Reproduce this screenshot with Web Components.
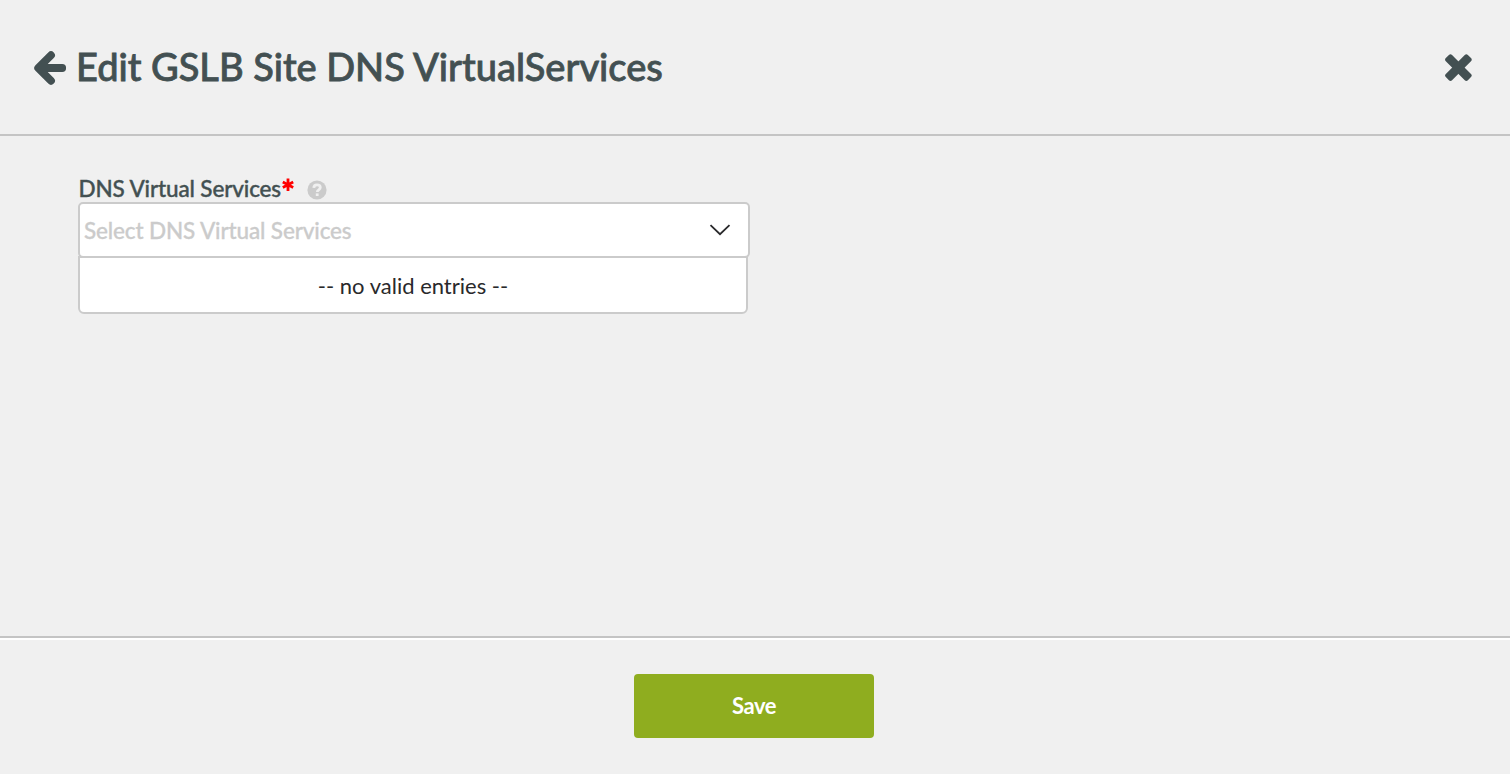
<!DOCTYPE html>
<html lang="en">
<head>
<meta charset="utf-8">
<title>Edit GSLB Site DNS VirtualServices</title>
<style>
html, body { margin: 0; height: 100%; }
body { background: #f0f0f0; font-family: Lato, "Open Sans", sans-serif; color: #435052; overflow: hidden; }
</style>
</head>
<body>
<edit-dialog>
  <dialog-header slot="header">Edit GSLB Site DNS VirtualServices</dialog-header>
  <select-field label="DNS Virtual Services" placeholder="Select DNS Virtual Services">-- no valid entries --</select-field>
  <save-button slot="footer">Save</save-button>
</edit-dialog>
<script>
function define(name, html) {
  customElements.define(name, class extends HTMLElement {
    constructor() {
      super();
      this.attachShadow({ mode: 'open' }).innerHTML = html;
    }
    connectedCallback() {
      this.shadowRoot.querySelectorAll('[data-attr]').forEach(el => {
        el.textContent = this.getAttribute(el.dataset.attr);
      });
    }
  });
}

define('edit-dialog', `
<style>
:host { display: grid; grid-template-rows: 136px 1fr 138px; height: 774px; }
main { padding: 38px 78px 0; min-width: 0; }
footer { box-sizing: border-box; border-top: 2px solid #c4c4c4; box-shadow: inset 0 2px #fff; padding: 36px 2px 0 0; display: flex; justify-content: center; align-items: flex-start; }
</style>
<slot name="header"></slot>
<main><slot></slot></main>
<footer><slot name="footer"></slot></footer>`);

define('dialog-header', `
<style>
:host { box-sizing: border-box; display: flex; align-items: center; height: 136px; padding: 1px 37px 0 33px; border-bottom: 2px solid #c4c4c4; }
h1 { margin: 0 auto 3px 9px; font-size: 38px; line-height: 46px; font-weight: 500; letter-spacing: -.02px; white-space: nowrap; -webkit-text-stroke: .8px #435052; }
svg { display: block; flex: none; }
</style>
<svg width="34" height="36" viewBox="0 0 34 36"><path d="M18 5.2 5.2 18 18 30.8M7 18H29.2" fill="none" stroke="#435052" stroke-width="7.8" stroke-linecap="round" stroke-linejoin="round"/><path d="M7 12v12l6-6z" fill="#435052"/></svg>
<h1><slot></slot></h1>
<svg width="28" height="28" viewBox="0 0 28 28"><g transform="rotate(45 13.4 13.6)" fill="#435052"><rect x="-2.2" y="9.2" width="31.2" height="8.8" rx="2.2"/><rect x="9" y="-2" width="8.8" height="31.2" rx="2.2"/></g></svg>`);

define('select-field', `
<style>
:host { display: block; width: 672px; }
.label { display: flex; height: 28px; align-items: flex-start; }
label { font-size: 22.5px; line-height: 29px; font-weight: 500; white-space: nowrap; letter-spacing: -.14px; padding-left: .5px; -webkit-text-stroke: .4px #435052; }
.star { margin: 4px 0 0 1px; }
.help { margin: 6px 0 0 13px; }
.select { box-sizing: border-box; display: flex; align-items: center; width: 672px; height: 56px; border: 2px solid #cbcbcb; border-radius: 5px; background: #fff; padding: 0 17px 0 4px; color: #cbcbcb; font-size: 22.5px; font-weight: 500; position: relative; z-index: 1; }
.select span { flex: 1; letter-spacing: -.14px; -webkit-text-stroke: .3px #cbcbcb; }
.menu { box-sizing: border-box; width: 670px; height: 58px; margin-top: -2px; border: 2px solid #cbcbcb; border-radius: 0 0 6px 6px; background: #fff; color: #29292b; font-size: 22px; line-height: 55px; text-align: center; }
svg { display: block; flex: none; }
</style>
<div class="label"><label data-attr="label"></label>
<svg class="star" width="12" height="14" viewBox="0 0 12 14"><path d="M6 .6v12.4M.8 4.1l10.4 5.4M11.2 4.1.8 9.5" stroke="#f00" stroke-width="2.8"/></svg>
<svg class="help" width="20" height="20" viewBox="0 0 20 20"><circle cx="10" cy="10" r="9.6" fill="#cbcbcb"/><path d="M6.8 7.9C6.9 5.6 8.2 4.9 10 4.9c2 0 3.3 1 3.3 2.7 0 2.3-3 2.2-3 4.3" fill="none" stroke="#f0f0f0" stroke-width="2.8"/><path d="M8.8 13.4h2.8v2.6H8.8z" fill="#f0f0f0"/></svg></div>
<div class="select"><span data-attr="placeholder"></span>
<svg width="22" height="14" viewBox="0 0 22 14"><path d="m1.5 2.2 9.5 9 9.5-9" fill="none" stroke="#29292b" stroke-width="1.8"/></svg></div>
<div class="menu"><slot></slot></div>`);

define('save-button', `
<style>
:host { display: block; }
button { display: block; width: 240px; height: 64px; border: 0; border-radius: 4px; padding: 0; background: #8fad1f; color: #fff; font: 700 22px/64px Lato, sans-serif; letter-spacing: -.5px; }
</style>
<button><slot></slot></button>`);
</script>
</body>
</html>
